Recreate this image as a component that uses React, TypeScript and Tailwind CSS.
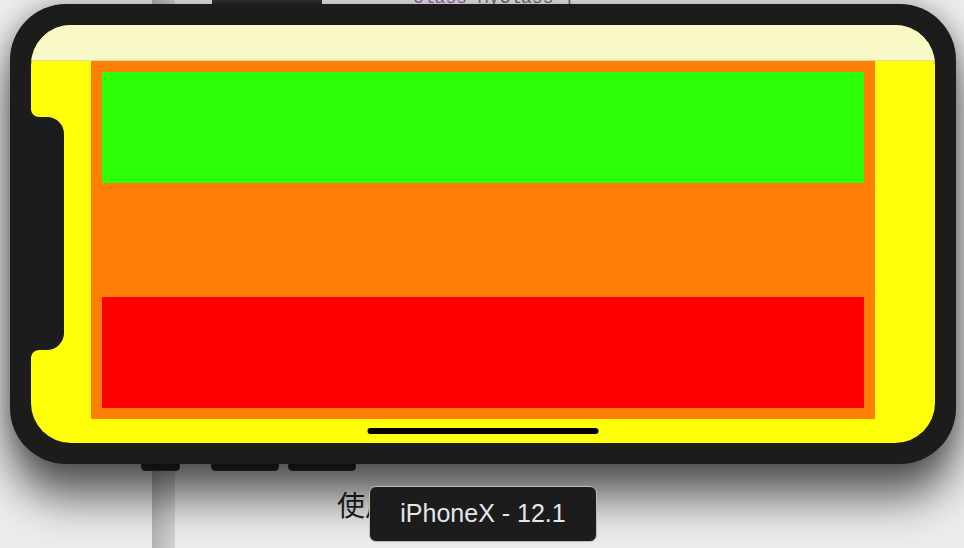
export default function App() {
  return (
    <div className="relative h-[548px] w-[964px] overflow-hidden bg-[#ececec] pl-[10px] pt-[4px]">
      {/* editor behind the simulator */}
      <div className="absolute left-[152px] top-0 h-full w-[23px] bg-gradient-to-r from-[#b4b4b4] to-[#d2d2d2]" />
      <div className="absolute left-[413px] top-[-11px] whitespace-pre font-['Liberation_Mono',monospace] text-[18px] leading-[18px] text-[#6b6b6b]">
        <span className="text-[#9d5cc6]">class</span> MyClass {"{"}
      </div>
      <div className="absolute left-[337px] top-[486px] font-['Noto_Sans_CJK_SC',sans-serif] text-[28px] leading-[36px] text-[#1e1e1e]">
        使用
      </div>

      <div className="relative h-[460px] w-[946px]">
        {/* hardware buttons */}
        <div className="absolute left-[202px] top-[-12px] h-[16px] w-[110px] rounded-[3px] bg-gradient-to-b from-[#3a3a3a] to-[#262626]" />
        <div className="absolute left-[131px] top-[450px] h-[17px] w-[39px] rounded-b-[4px] border border-[#454545] bg-[#2b2b2b]" />
        <div className="absolute left-[201px] top-[450px] h-[17px] w-[68px] rounded-b-[4px] border border-[#454545] bg-[#2b2b2b]" />
        <div className="absolute left-[278px] top-[450px] h-[17px] w-[68px] rounded-b-[4px] border border-[#454545] bg-[#2b2b2b]" />

        <div className="relative z-10 h-full w-full rounded-[56px] bg-[#1c1c1c] p-[21px] shadow-[0_34px_44px_0_rgba(0,0,0,0.6),0_0_26px_rgba(0,0,0,0.3)]">
          <div className="relative flex h-full flex-col overflow-hidden rounded-[40px] bg-[#ffff0a]">
            <div className="h-[36px] shrink-0 border-b border-[#e0d9a6] bg-[#f9f9c8]" />
            <div className="mx-[60px] flex h-[358px] flex-col justify-between bg-[#fd7f08] p-[11px]">
              <div className="h-[111px] bg-[#2dff0b]" />
              <div className="h-[111px] bg-[#fe0000]" />
            </div>

            <svg className="absolute left-0 top-[85px]" width="37" height="247" viewBox="0 0 37 247">
              <path
                d="M0 0 A8 8 0 0 0 8 7 H16 A17 17 0 0 1 33 24 V223 A17 17 0 0 1 16 240 H8 A8 8 0 0 0 0 247 Z"
                fill="#1c1c1c"
              />
            </svg>
            <div className="absolute bottom-[9px] left-1/2 h-[6px] w-[231px] -translate-x-1/2 rounded-full bg-black" />
          </div>
        </div>
      </div>

      <div className="absolute left-[369px] top-[486px] z-20 flex h-[56px] w-[228px] items-center justify-center rounded-[7px] border border-[#bdbdbd] bg-[#1c1c1c] font-['Liberation_Sans',sans-serif] text-[25px] text-[#e4e6ea]">
        iPhoneX - 12.1
      </div>
    </div>
  );
}
